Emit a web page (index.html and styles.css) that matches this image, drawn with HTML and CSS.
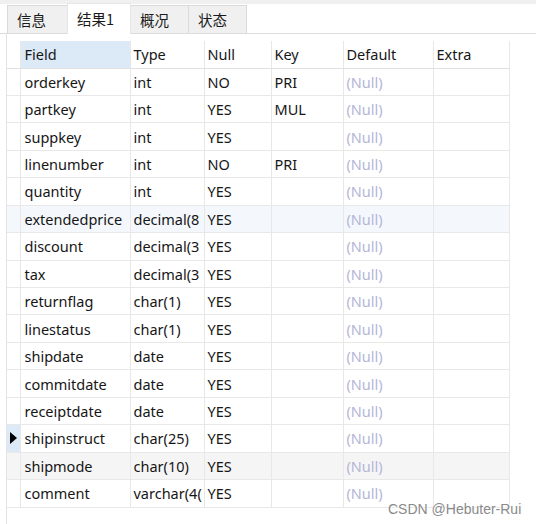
FILE: index.html
```html
<!DOCTYPE html>
<html>
<head>
<meta charset="utf-8">
<link rel="stylesheet" href="styles.css">
</head>
<body>
<div class="window">
  <div class="tabbar">
    <div class="tab">信息</div>
    <div class="tab active">结果1</div>
    <div class="tab">概况</div>
    <div class="tab">状态</div>
  </div>
  <div class="panel">
    <table class="grid">
      <colgroup>
        <col class="c-ind"><col class="c-field"><col class="c-type"><col class="c-null"><col class="c-key"><col class="c-def"><col class="c-extra">
      </colgroup>
      <thead>
        <tr><th class="ind"></th><th class="sel">Field</th><th>Type</th><th>Null</th><th>Key</th><th>Default</th><th>Extra</th></tr>
      </thead>
      <tbody>
        <tr><td class="ind"></td><td>orderkey</td><td>int</td><td>NO</td><td>PRI</td><td class="nul">(Null)</td><td></td></tr>
        <tr><td class="ind"></td><td>partkey</td><td>int</td><td>YES</td><td>MUL</td><td class="nul">(Null)</td><td></td></tr>
        <tr><td class="ind"></td><td>suppkey</td><td>int</td><td>YES</td><td></td><td class="nul">(Null)</td><td></td></tr>
        <tr><td class="ind"></td><td>linenumber</td><td>int</td><td>NO</td><td>PRI</td><td class="nul">(Null)</td><td></td></tr>
        <tr><td class="ind"></td><td>quantity</td><td>int</td><td>YES</td><td></td><td class="nul">(Null)</td><td></td></tr>
        <tr class="tint-blue"><td class="ind"></td><td>extendedprice</td><td>decimal(8</td><td>YES</td><td></td><td class="nul">(Null)</td><td></td></tr>
        <tr><td class="ind"></td><td>discount</td><td>decimal(3</td><td>YES</td><td></td><td class="nul">(Null)</td><td></td></tr>
        <tr><td class="ind"></td><td>tax</td><td>decimal(3</td><td>YES</td><td></td><td class="nul">(Null)</td><td></td></tr>
        <tr><td class="ind"></td><td>returnflag</td><td>char(1)</td><td>YES</td><td></td><td class="nul">(Null)</td><td></td></tr>
        <tr><td class="ind"></td><td>linestatus</td><td>char(1)</td><td>YES</td><td></td><td class="nul">(Null)</td><td></td></tr>
        <tr><td class="ind"></td><td>shipdate</td><td>date</td><td>YES</td><td></td><td class="nul">(Null)</td><td></td></tr>
        <tr><td class="ind"></td><td>commitdate</td><td>date</td><td>YES</td><td></td><td class="nul">(Null)</td><td></td></tr>
        <tr><td class="ind"></td><td>receiptdate</td><td>date</td><td>YES</td><td></td><td class="nul">(Null)</td><td></td></tr>
        <tr class="current"><td class="ind"><span class="arrow"></span></td><td>shipinstruct</td><td>char(25)</td><td>YES</td><td></td><td class="nul">(Null)</td><td></td></tr>
        <tr class="tint-gray"><td class="ind"></td><td>shipmode</td><td>char(10)</td><td>YES</td><td></td><td class="nul">(Null)</td><td></td></tr>
        <tr><td class="ind"></td><td>comment</td><td>varchar(4(</td><td>YES</td><td></td><td class="nul">(Null)</td><td></td></tr>
      </tbody>
    </table>
  </div>
  <div class="watermark">CSDN @Hebuter-Rui</div>
</div>
</body>
</html>
```
FILE: styles.css
```css
html, body {
  margin: 0;
  padding: 0;
  background: #ffffff;
}
.window {
  position: relative;
  width: 536px;
  height: 524px;
  overflow: hidden;
  font-family: "Noto Sans", "Noto Sans CJK SC", sans-serif;
  font-size: 14.5px;
  color: #161616;
  background: #ffffff;
}
.tabbar {
  display: flex;
  align-items: flex-end;
  height: 33px;
  padding-left: 7px;
  background: linear-gradient(#f0f0f0 0, #f0f0f0 4px, #ffffff 4px);
  border-bottom: 1px solid #dcdcdc;
  box-sizing: content-box;
}
.tab {
  box-sizing: border-box;
  height: 28px;
  padding: 0 9px;
  display: flex;
  align-items: center;
  background: #f0f0f0;
  border: 1px solid #dadada;
  border-bottom: none;
  font-family: "Noto Sans CJK SC", sans-serif;
  font-size: 14.5px;
  color: #1a1a1a;
  margin-right: -1px;
}
.tab:nth-child(1) { width: 61px; }
.tab:nth-child(2) { width: 64px; }
.tab:nth-child(3) { width: 59px; }
.tab:nth-child(4) { width: 59px; }
.tab.active {
  height: 31px;
  background: #ffffff;
  border-color: #e6e6e6;
  position: relative;
  top: 1px;
  padding-bottom: 2px;
}
.panel {
  padding: 7px 0 0 0;
  background: #ffffff;
  height: 490px;
  border-left: 1px solid #e4e4e4;
  margin-left: 6px;
}
.grid {
  border-collapse: collapse;
  table-layout: fixed;
  width: 502px;
}
.c-ind { width: 13px; }
.c-field { width: 110px; }
.c-type { width: 74px; }
.c-null { width: 67px; }
.c-key { width: 72px; }
.c-def { width: 90px; }
.c-extra { width: 76px; }
.grid th, .grid td {
  border: 1px solid #e8e8e8;
  padding: 0 0 0 3px;
  text-align: left;
  font-weight: normal;
  white-space: nowrap;
  overflow: hidden;
  text-overflow: clip;
  box-sizing: border-box;
}
.grid th.sel, .grid tbody td:nth-child(2) {
  padding-left: 4px;
}
.grid thead th {
  height: 27px;
  border-top: none;
  border-bottom: 1px solid #e0e0e0;
}
.grid tbody td {
  height: 27.44px;
}
.grid .ind {
  padding: 0;
  border-left: none;
}
.grid th.sel {
  background: #dceaf7;
}
.nul {
  color: #b5b6d8;
}
.tint-blue td { background: #f4f8fd; }
.tint-gray td { background: #f5f5f5; }
.current td.ind { background: #dceaf7; }
.arrow {
  display: block;
  width: 0;
  height: 0;
  margin-left: 3px;
  border-top: 6px solid transparent;
  border-bottom: 6px solid transparent;
  border-left: 7px solid #000000;
}
.watermark {
  position: absolute;
  left: 388px;
  top: 501px;
  font-family: "Liberation Sans", sans-serif;
  font-size: 14px;
  color: #8a8a8a;
  text-shadow: 0 0 2px #ffffff, 0 0 2px #ffffff;
}
```
